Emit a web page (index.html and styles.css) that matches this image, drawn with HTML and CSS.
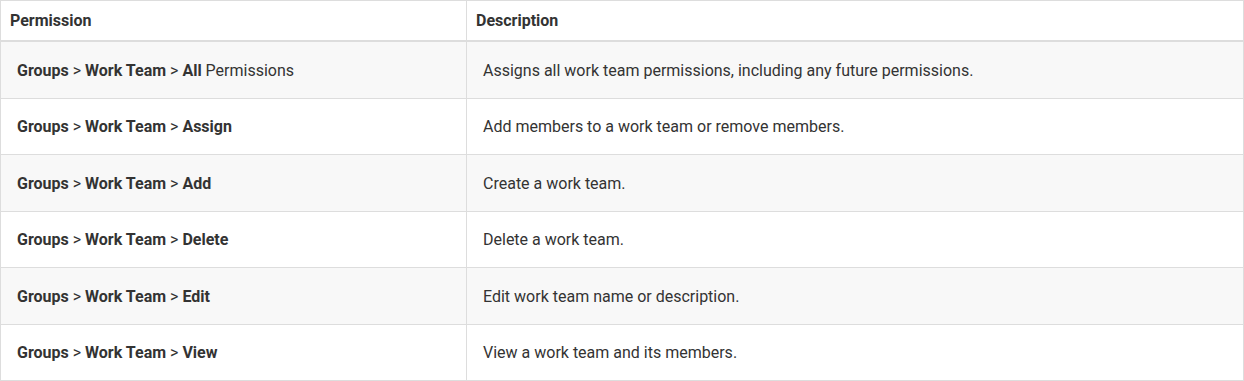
FILE: index.html
```html
<!DOCTYPE html>
<html lang="en">
<head>
<meta charset="UTF-8">
<meta name="viewport" content="width=device-width, initial-scale=1.0">
<title>Work Team Permissions</title>
<link rel="stylesheet" href="styles.css">
</head>
<body>

<table class="perm-table">
    <thead>
        <tr>
            <th class="col-perm">Permission</th>
            <th>Description</th>
        </tr>
    </thead>
    <tbody>
        <tr>
            <td><b>Groups</b> &gt; <b>Work Team</b> &gt; <b>All</b> Permissions</td>
            <td>Assigns all work team permissions, including any future permissions.</td>
        </tr>
        <tr>
            <td><b>Groups</b> &gt; <b>Work Team</b> &gt; <b>Assign</b></td>
            <td>Add members to a work team or remove members.</td>
        </tr>
        <tr>
            <td><b>Groups</b> &gt; <b>Work Team</b> &gt; <b>Add</b></td>
            <td>Create a work team.</td>
        </tr>
        <tr>
            <td><b>Groups</b> &gt; <b>Work Team</b> &gt; <b>Delete</b></td>
            <td>Delete a work team.</td>
        </tr>
        <tr>
            <td><b>Groups</b> &gt; <b>Work Team</b> &gt; <b>Edit</b></td>
            <td>Edit work team name or description.</td>
        </tr>
        <tr>
            <td><b>Groups</b> &gt; <b>Work Team</b> &gt; <b>View</b></td>
            <td>View a work team and its members.</td>
        </tr>
    </tbody>
</table>

</body>
</html>
```

FILE: styles.css
```css
body {
    font-family: Roboto, "Liberation Sans", sans-serif;
    font-size: 16px;
    color: #333;
    background-color: #fff;
    margin: 0;
    padding: 0;
}

.perm-table {
    width: 1244px;
    border-collapse: collapse;
    table-layout: fixed;
}

.perm-table th,
.perm-table td {
    border: 1px solid #ddd;
    text-align: left;
    vertical-align: middle;
    line-height: 20px;
}

.perm-table th {
    font-weight: bold;
    padding: 10px 9px 9px;
    border-bottom: 2px solid #ddd;
}

.col-perm {
    width: 447px;
}

.perm-table td {
    padding: 18.5px 16px 17px;
}

.perm-table b {
    font-weight: bold;
}

.perm-table tbody tr:nth-child(odd) {
    background-color: #f8f8f8;
}
```
